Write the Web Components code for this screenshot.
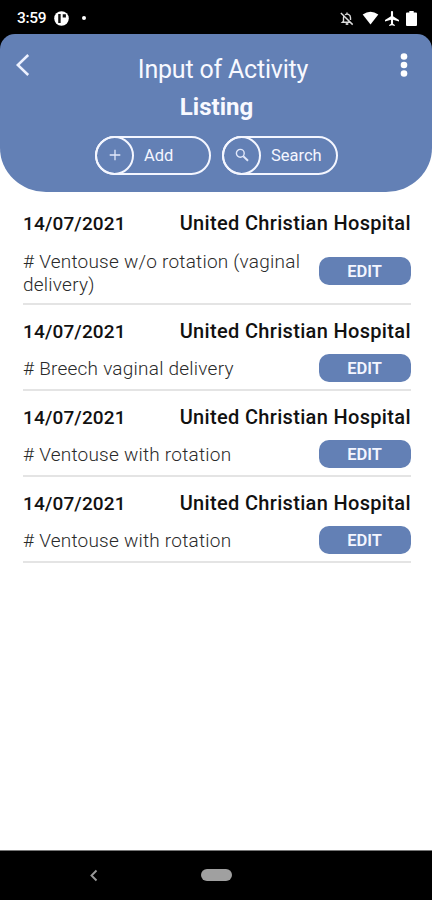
<!DOCTYPE html>
<html lang="en">
<head>
<meta charset="utf-8">
<title>Input of Activity</title>
<style>
  html, body { margin: 0; height: 100%; }
  body { font-family: Roboto, "Liberation Sans", sans-serif; background: #fff; overflow: hidden; }
</style>
</head>
<body>
<activity-app></activity-app>
<script>
const define = (name, html) => customElements.define(name, class extends HTMLElement {
  constructor() {
    super();
    const t = document.createElement('template');
    t.innerHTML = html;
    this.attachShadow({ mode: 'open' }).append(t.content.cloneNode(true));
  }
});

define('status-bar', `
<style>
  :host { display: flex; height: 34px; box-sizing: border-box; padding: 2px 15px 0 17px; align-items: center; color: #fff; background: #000; }
  .time { font-size: 15.5px; line-height: 18px; font-weight: 500; letter-spacing: -.35px; width: 37px; }
  .dot { width: 4px; height: 4px; border-radius: 50%; background: #fff; margin-left: 13px; }
  .right { margin-left: auto; display: flex; align-items: center; }
  svg { display: block; }
</style>
<span class="time">3:59</span>
<svg width="15" height="15" viewBox="0 0 16 16"><circle cx="8" cy="8" r="7.8" fill="#fff"/><path d="M4.500 3.200h2.600v9.600H4.500zM9.300 3.500h3.400V7H9.300z" fill="#111"/></svg>
<span class="dot"></span>
<span class="right">
  <svg width="14" height="15" viewBox="0 0 16 16" fill="none" stroke="#ddd" stroke-width="1.6"><path d="M1 1.800 14.500 15M4.300 5.300C3.800 6.600 4 9 4 11l-1.300 1.300h9M5.800 3.800C7.700 2.200 12 3.200 12 7v2.600M8 1.200v1.600"/><path d="M6.500 14.300h3" stroke-width="2"/></svg>
  <svg width="17" height="14" viewBox="0 0 17 14" style="margin-left:8px"><path d="M.7 3.600Q8.500-2.300 16.300 3.600L8.500 13.400Z" fill="#fff"/></svg>
  <svg width="14" height="15" viewBox="2 2 20 20" preserveAspectRatio="none" style="margin-left:6px"><path fill="#fff" d="M22 16v-2l-8.500-5V3.500C13.500 2.670 12.830 2 12 2s-1.500.670-1.500 1.500V9L2 14v2l8.500-2.500V19L8 20.500V22l4-1 4 1v-1.500L13.500 19v-5.500L22 16z"/></svg>
  <svg width="11" height="15" viewBox="0 0 11 15" style="margin-left:7px"><path d="M0 2.500Q0 1.600 1 1.600h2.300V0h4.400v1.600H10q1 0 1 .9V14q0 1-1 1H1q-1 0-1-1Z" fill="#fff"/></svg>
</span>`);

define('pill-button', `
<style>
  :host { display: flex; box-sizing: border-box; height: 39px; width: 116px; border: 2px solid #f4f6ff; border-radius: 20px; color: #f4f6ff; align-items: center; }
  .ring { flex: none; box-sizing: border-box; width: 39px; height: 39px; margin-left: -2px; border: 2px solid #f4f6ff; border-radius: 50%; display: flex; align-items: center; justify-content: center; }
  .label { margin-left: 10px; font-size: 16.500px; line-height: 20px; padding-top: 2px; white-space: nowrap; }
</style>
<span class="ring"><slot name="icon"></slot></span><span class="label"><slot></slot></span>`);

define('app-header', `
<style>
  :host { display: block; background: linear-gradient(#000 0 50px, #fff 50px); }
  .panel { display: grid; grid-template-columns: 60px 1fr 60px; grid-template-rows: 70px 30px auto; box-sizing: border-box; height: 158px; background: #6380b5; border-radius: 15px 15px 46px 46px / 15px 15px 44px 44px; color: #f8f9ff; }
  .back { padding: 19px 0 0 15px; }
  .more { padding: 18px 0 0 27px; }
  svg { display: block; }
  h1, h2 { margin: 0; text-align: center; white-space: nowrap; }
  h1 { font-size: 25px; line-height: 30px; padding-top: 21px; font-weight: 400; padding-left: 14px; letter-spacing: -.200px; }
  h2 { grid-column: 1 / 4; font-size: 24px; line-height: 30px; font-weight: 700; padding-left: 1px; margin-top: -12px; }
  .actions { grid-column: 1 / 4; display: flex; justify-content: center; gap: 11px; margin-top: 1.500px; padding-left: 1px; }
</style>
<div class="panel">
  <div class="back"><svg width="16" height="24" viewBox="0 0 16 24"><path d="M13.200 2 2.800 12 13.200 22" fill="none" stroke="#edf1ff" stroke-width="2.500"/></svg></div>
  <h1>Input of Activity</h1>
  <div class="more"><svg width="10" height="26" viewBox="0 0 10 26" fill="#fff"><circle cx="5" cy="4.500" r="3.300"/><circle cx="5" cy="13" r="3.300"/><circle cx="5" cy="21.500" r="3.300"/></svg></div>
  <h2>Listing</h2>
  <div class="actions">
    <pill-button><svg slot="icon" width="12" height="12" viewBox="0 0 12 12"><path d="M6 .7v10.600M.7 6h10.600" stroke="#e2e8fb" stroke-width="1.300"/></svg>Add</pill-button>
    <pill-button><svg slot="icon" width="14" height="14" viewBox="0 0 14 14" fill="none" stroke="#e2e8fb"><circle cx="5.300" cy="5.300" r="3.900" stroke-width="1.400"/><path d="m8.300 8.300 4.700 4.500" stroke-width="1.900"/></svg>Search</pill-button>
  </div>
</div>`);

define('activity-item', `
<style>
  :host { display: grid; grid-template-columns: 1fr 92px; margin: 0 21.500px 0 23px; border-bottom: 2px solid #e4e4e4; padding: 13px 0 7px; row-gap: 9px; align-items: center; color: #111; }
  :host([multiline]) .desc { padding: 4px 0 0; }
  .top { grid-column: 1 / 3; display: flex; justify-content: space-between; font-size: 19px; line-height: 27px; font-weight: 500; white-space: nowrap; }
  .date { letter-spacing: .150px; }
  .place { font-size: 20px; letter-spacing: .330px; margin-right: -.330px; }
  .desc { font-size: 19px; line-height: 23px; color: #2a2a2a; letter-spacing: .230px; font-weight: 350; white-space: pre; padding-top: 1px; }
  .edit { height: 28px; border-radius: 10px; background: #6380b5; color: #f4f6ff; font-size: 16.500px; line-height: 29px; text-align: center; font-weight: 600; }
</style>
<div class="top"><span class="date"><slot name="date"></slot></span><span class="place"><slot name="place"></slot></span></div>
<div class="desc"><slot></slot></div>
<div class="edit">EDIT</div>`);

define('nav-bar', `
<style>
  :host { display: flex; align-items: center; height: 50px; box-sizing: border-box; background: #000; border-top: 1px solid #777; padding-left: 89px; }
  .home { width: 31px; height: 12px; border-radius: 6px; background: #a0a0a0; margin: -1px 0 0 103px; }
</style>
<svg width="9" height="13" viewBox="0 0 9 13"><path d="M7.500 1.500 2.500 6.500l5 5" fill="none" stroke="#999" stroke-width="1.900"/></svg>
<span class="home"></span>`);

define('activity-app', `
<style>
  :host { display: flex; flex-direction: column; width: 432px; height: 900px; background: #fff; }
  main { flex: 1; padding-top: 5px; }
</style>
<status-bar></status-bar>
<app-header></app-header>
<main>
  <activity-item multiline><span slot="date">14/07/2021</span><span slot="place">United Christian Hospital</span># Ventouse w/o rotation (vaginal
delivery)</activity-item>
  <activity-item><span slot="date">14/07/2021</span><span slot="place">United Christian Hospital</span># Breech vaginal delivery</activity-item>
  <activity-item><span slot="date">14/07/2021</span><span slot="place">United Christian Hospital</span># Ventouse with rotation</activity-item>
  <activity-item><span slot="date">14/07/2021</span><span slot="place">United Christian Hospital</span># Ventouse with rotation</activity-item>
</main>
<nav-bar></nav-bar>`);
</script>
</body>
</html>
